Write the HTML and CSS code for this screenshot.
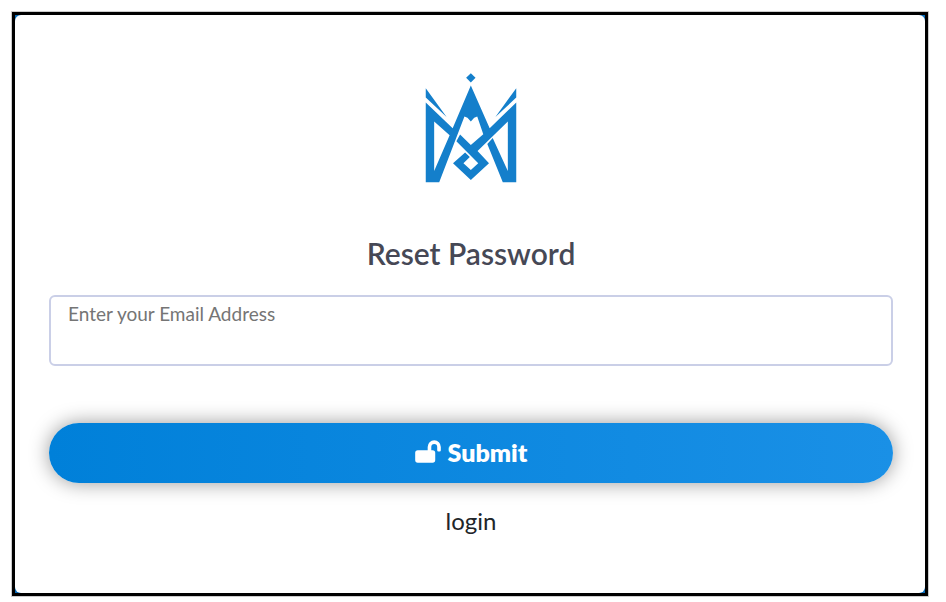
FILE: index.html
```html
<!DOCTYPE html>
<html lang="en">
<head>
<meta charset="utf-8">
<meta name="viewport" content="width=device-width, initial-scale=1">
<title>Reset Password</title>
<link rel="stylesheet" href="styles.css">
</head>
<body>
<div class="frame">
<main class="card">
  <svg class="logo" viewBox="47 24 271 327" role="img" aria-label="Logo">
    <path d="M182 25l14 13-14 14-14-14z"/>
    <path d="M48 69v28l62 58zM317 69v28l-62 58z"/>
    <path fill-rule="evenodd" d="M48 112L128 188L182 61L238 188L317 112V349H277L231 235L247 217L292 315V168L202 256L236 292L182 342L129 292L165 260L179 274L160 292L182 312L204 292L139 227L150 207L182 238L219 206L201 153L192 157L182 168L172 157L163 153L88 349H48ZM73 168V315L119 209Z"/>
  </svg>
  <h1 class="title">Reset Password</h1>
  <form class="form">
    <textarea class="email" aria-label="Email Address" placeholder="Enter your Email Address"></textarea>
    <button class="submit" type="button">
      <svg class="lock" viewBox="0 0 78 70" aria-hidden="true">
        <path d="M8 31H38V21a20 20 0 0 1 40 0V31a4 4 0 0 1-4 4h-3a4 4 0 0 1-4-4V21a9 9 0 0 0-18 0V31h4a8 8 0 0 1 8 8V61a8 8 0 0 1-8 8H8a8 8 0 0 1-8-8V39a8 8 0 0 1 8-8z"/>
      </svg>
      <span>Submit</span>
    </button>
  </form>
  <a class="login" href="#">login</a>
</main>
</div>
</body>
</html>
```
FILE: styles.css
```css
* {
  box-sizing: border-box;
}

body {
  margin: 0;
  padding: 12px 18px 6px 12px;
  min-height: 100vh;
  display: flex;
  background: #fff;
  font-family: Lato, "Open Sans", sans-serif;
}

.frame {
  flex: 1;
  display: flex;
  border: 3px solid #000;
  background: #0a6cb8;
  box-shadow: 0 0 0 1px #ccc;
}

.card {
  flex: 1;
  display: flex;
  flex-direction: column;
  align-items: center;
  padding: 58px 32px 48px 34px;
  border-radius: 6px;
  background: #fff;
}

.logo {
  width: 92px;
  height: 110px;
  fill: #147fcb;
}

.title {
  margin: 50px 0 22px;
  font-size: 30px;
  line-height: 40px;
  font-weight: 600;
  color: #464855;
}

.form {
  width: 100%;
  display: flex;
  flex-direction: column;
  gap: 57px;
}

.email {
  display: block;
  width: 100%;
  height: 71px;
  padding: 5px 17px;
  border: 2px solid #cacfe7;
  border-radius: 6px;
  background: #fff;
  font: 19px/24px Lato, "Open Sans", sans-serif;
  color: #464855;
  resize: none;
}

.email::placeholder {
  color: #757575;
}

.submit {
  display: flex;
  align-items: center;
  justify-content: center;
  gap: 7px;
  width: 100%;
  height: 60px;
  padding: 0 0 3px;
  border: 0;
  border-radius: 30px;
  background: linear-gradient(90deg, #0080d9, #1a90e6);
  box-shadow: 0 0 20px rgba(0, 0, 0, 0.4);
  font: 800 25px/32px Lato, "Open Sans", sans-serif;
  color: #fff;
}

.lock {
  width: 26px;
  height: 23px;
  fill: #fff;
}

.login {
  margin-top: 22px;
  font-size: 24px;
  line-height: 32px;
  color: #212529;
  text-decoration: none;
}
```
